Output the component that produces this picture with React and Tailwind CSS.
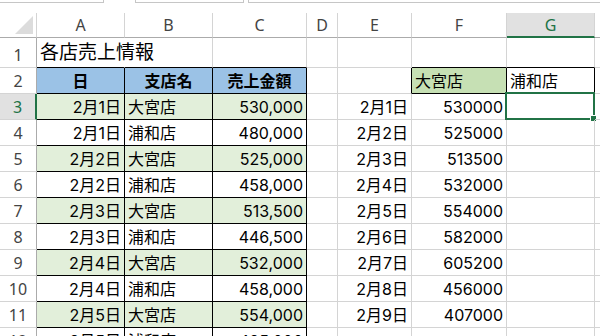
const COLS = ["", "A", "B", "C", "D", "E", "F", "G", ""];

const dates = ["2月1日", "2月1日", "2月2日", "2月2日", "2月3日", "2月3日", "2月4日", "2月4日", "2月5日", "2月5日"];
const shops = ["大宮店", "浦和店"];
const sales = ["530,000", "480,000", "525,000", "458,000", "513,500", "446,500", "532,000", "458,000", "554,000", "485,000"];
const ohmiya = ["530000", "525000", "513500", "532000", "554000", "582000", "605200", "456000", "407000"];

// cell contents keyed "row,col"
const cells = {};
dates.forEach((d, i) => {
  cells[`${i + 3},1`] = { text: d, align: "right" };
  cells[`${i + 3},2`] = { text: shops[i % 2], align: "left" };
  cells[`${i + 3},3`] = { text: sales[i], align: "right" };
});
ohmiya.forEach((v, i) => {
  cells[`${i + 3},5`] = { text: `2月${i + 1}日`, align: "right" };
  cells[`${i + 3},6`] = { text: v, align: "right" };
});
cells["2,1"] = { text: "日", align: "center", bold: true };
cells["2,2"] = { text: "支店名", align: "center", bold: true };
cells["2,3"] = { text: "売上金額", align: "center", bold: true };
cells["2,6"] = { text: "大宮店", align: "left" };
cells["2,7"] = { text: "浦和店", align: "left" };

const boxes = [
  [2, 12, 1, 3],
  [2, 2, 6, 7],
];
const inBox = (r, c) => boxes.some(([r1, r2, c1, c2]) => r >= r1 && r <= r2 && c >= c1 && c <= c2);

function fill(r, c) {
  if (r === 2 && c >= 1 && c <= 3) return "bg-[#9bc2e6]";
  if (r === 2 && c === 6) return "bg-[#c6e0b4]";
  if (r >= 3 && r % 2 === 1 && c >= 1 && c <= 3) return "bg-[#e2efda]";
  return "";
}

function Cell({ r, c }) {
  const cell = cells[`${r},${c}`];
  const right = r === 1 && c === 1 ? "border-r-transparent" : inBox(r, c) || inBox(r, c + 1) ? "border-r-black" : "border-r-[#d4d4d4]";
  const bottom = inBox(r, c) || inBox(r + 1, c) ? "border-b-black" : "border-b-[#d4d4d4]";
  const justify = cell?.align === "right" ? "justify-end" : cell?.align === "center" ? "justify-center" : "justify-start";
  return (
    <div className={`relative flex items-end overflow-visible whitespace-nowrap border-r border-b px-[3px] pb-[1px] ${right} ${bottom} ${fill(r, c)} ${justify}`}>
      {r === 1 && c === 1 && <span className="text-[19px] leading-[26px] text-black">各店売上情報</span>}
      {cell && <span className={`text-[16px] leading-[22px] text-black ${cell.bold ? "font-bold" : ""}`}>{cell.text}</span>}
      {r === 3 && c === 7 && (
        <div className="absolute -top-[2px] -left-[2px] -right-[1px] -bottom-[1px] border-2 border-[#217346]">
          <div className="absolute -right-[4px] -bottom-[4px] h-[7px] w-[7px] border border-white bg-[#217346]" />
        </div>
      )}
    </div>
  );
}

export default function App() {
  const rows = Array.from({ length: 12 }, (_, i) => i + 1);
  return (
    <div className="h-[336px] w-[600px] overflow-hidden bg-white" style={{ fontFamily: 'Inter, "Noto Sans CJK JP", sans-serif' }}>
      <div className="flex h-[13px] items-start">
        <div className="h-[3px] w-[104px] border-r border-b border-[#c6c6c6]" />
        <div className="ml-[31px] h-[3px] w-[109px] border-x border-b border-[#c6c6c6]" />
        <div className="ml-[4px] h-[3px] flex-1 border-l border-b border-[#c6c6c6]" />
      </div>
      <div className="grid grid-cols-[37px_88px_88px_94px_31px_74px_95px_88px_1fr] grid-rows-[25px_30px_repeat(11,26px)]">
        {COLS.map((col, c) => (
          <div
            key={`h${c}`}
            className={`relative flex items-center justify-center border-r border-r-[#d4d4d4] text-[16px] ${
              c === 7 ? "border-b-2 border-b-[#217346] bg-[#e1e1e1] text-[#217346]" : "border-b border-b-[#ababab] text-[#444]"
            }`}
            style={{ fontFamily: '"Noto Sans", sans-serif' }}
          >
            {c === 0 ? (
              <svg className="absolute right-[3px] bottom-[3px]" width="18" height="18" viewBox="0 0 18 18">
                <polygon points="18,0 18,18 0,18" fill="#dcdcdc" />
              </svg>
            ) : (
              col
            )}
          </div>
        ))}
        {rows.map((r) => (
          <div key={r} className="contents">
            <div
              className={`flex items-end justify-center pb-[1px] text-[16px] leading-[22px] ${
                r === 3 ? "border-r-2 border-r-[#217346] border-b border-b-[#d4d4d4] bg-[#e1e1e1] text-[#217346]" : "border-r border-b border-r-[#ababab] border-b-[#d4d4d4] text-[#444]"
              }`}
              style={{ fontFamily: '"Noto Sans", sans-serif' }}
            >
              {r}
            </div>
            {COLS.slice(1).map((_, i) => (
              <Cell key={i} r={r} c={i + 1} />
            ))}
          </div>
        ))}
      </div>
    </div>
  );
}
